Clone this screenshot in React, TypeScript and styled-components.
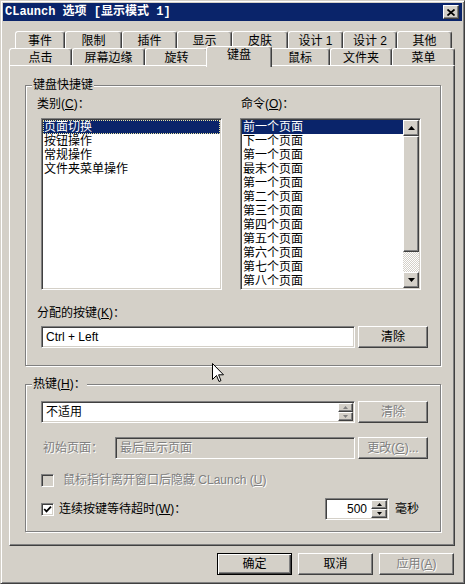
import React from 'react';
import styled, { createGlobalStyle, css } from 'styled-components';

const FACE = '#d4d0c8';
const SHADOW = '#808080';
const DARK = '#404040';
const NAVY = '#0a246a';

const GlobalStyle = createGlobalStyle`
  html, body {
    margin: 0;
    padding: 0;
    background: ${FACE};
  }
  body {
    font-family: "Liberation Sans", "Noto Sans CJK SC", sans-serif;
    font-size: 12px;
    line-height: 14px;
    color: #000;
  }
  * { box-sizing: border-box; }
`;

const raised = css`
  border: 1px solid;
  border-color: #fff ${DARK} ${DARK} #fff;
  box-shadow: inset -1px -1px ${SHADOW}, inset 1px 1px ${FACE};
  background: ${FACE};
`;

const sunken = css`
  border: 1px solid;
  border-color: ${SHADOW} #fff #fff ${SHADOW};
  box-shadow: inset 1px 1px ${DARK}, inset -1px -1px ${FACE};
`;

const greyed = css`
  color: ${SHADOW};
  text-shadow: 1px 1px #fff;
`;

const Window = styled.div`
  position: relative;
  width: 465px;
  height: 584px;
  background: ${FACE};
  border: 1px solid;
  border-color: ${FACE} ${DARK} ${DARK} ${FACE};
  box-shadow: inset 1px 1px #fff, inset -1px -1px ${SHADOW};
  padding: 2px;
  display: flex;
  flex-direction: column;
`;

const TitleBar = styled.div`
  height: 18px;
  background: ${NAVY};
  display: flex;
  align-items: center;
  justify-content: space-between;
  padding: 0 3px 0 2px;
`;

const TitleText = styled.span`
  font-family: "Liberation Mono", "Noto Sans CJK SC", monospace;
  font-weight: bold;
  font-size: 12px;
  color: #fff;
  white-space: pre;
`;

const CloseButton = styled.div`
  ${raised};
  width: 16px;
  height: 14px;
  display: flex;
  align-items: center;
  justify-content: center;
`;

const Body = styled.div`
  flex: 1;
  display: flex;
  flex-direction: column;
  padding: 10px 7px 0 6px;
`;

const TabRow = styled.div<{ $indent: number }>`
  display: flex;
  align-items: flex-end;
  height: 17px;
  padding-left: ${p => p.$indent}px;
`;

const Tab = styled.div<{ $w: number; $active?: boolean }>`
  width: ${p => p.$w + (p.$active ? 4 : 0)}px;
  height: ${p => (p.$active ? 21 : 17)}px;
  margin: ${p => (p.$active ? '0 -2px -2px' : '0')};
  position: ${p => (p.$active ? 'relative' : 'static')};
  z-index: ${p => (p.$active ? 2 : 'auto')};
  background: ${FACE};
  border: 1px solid;
  border-bottom: none;
  border-color: #fff ${DARK} transparent #fff;
  border-radius: 3px 3px 0 0;
  box-shadow: inset -1px 0 ${SHADOW};
  text-align: center;
  padding-top: ${p => (p.$active ? 1 : 2)}px;
  white-space: nowrap;
`;

const Panel = styled.div`
  height: 481px;
  border: 1px solid;
  border-color: #fff ${DARK} ${DARK} #fff;
  box-shadow: inset -1px -1px ${SHADOW};
  padding: 19px 0 0 15px;
  display: flex;
  flex-direction: column;
`;

const GroupBox = styled.div<{ $mt: number; $pb: number }>`
  width: 416px;
  margin-top: ${p => p.$mt}px;
  border: 1px solid ${SHADOW};
  box-shadow: inset 1px 1px #fff, 1px 1px #fff;
  padding: 0 12px ${p => p.$pb}px 15px;
  display: flex;
  flex-direction: column;
`;

const GroupTitle = styled.div`
  align-self: flex-start;
  margin: -8px 0 0 -9px;
  padding: 0 1px;
  background: ${FACE};
  line-height: 14px;
  white-space: nowrap;
`;

const U = styled.span`
  text-decoration: underline;
`;

const Columns = styled.div`
  display: grid;
  grid-template-columns: 181px 181px;
  column-gap: 18px;
  margin-top: 5px;
`;

const Column = styled.div`
  display: flex;
  flex-direction: column;
`;

const FieldLabel = styled.div<{ $mt?: number; $inset?: number }>`
  margin-top: ${p => p.$mt ?? 0}px;
  margin-left: ${p => p.$inset ?? -4}px;
  line-height: 14px;
  white-space: nowrap;
`;

const ListBox = styled.div<{ $scroll?: boolean }>`
  ${sunken};
  margin-top: 7px;
  height: 172px;
  background: #fff;
  padding: 1px;
  display: grid;
  grid-template-columns: ${p => (p.$scroll ? '1fr 16px' : '1fr')};
  overflow: hidden;
`;

const Items = styled.div`
  display: flex;
  flex-direction: column;
  min-width: 0;
`;

const Item = styled.div<{ $sel?: boolean; $focus?: boolean }>`
  height: 14px;
  line-height: 14px;
  padding-left: 1px;
  white-space: nowrap;
  background: ${p => (p.$sel ? NAVY : 'transparent')};
  color: ${p => (p.$sel ? '#fff' : '#000')};
  outline: ${p => (p.$focus ? '1px dotted #e8e4a0' : 'none')};
  outline-offset: -1px;
`;

const ScrollBar = styled.div`
  display: flex;
  flex-direction: column;
`;

const ScrollButton = styled.div<{ $h?: number }>`
  ${raised};
  height: ${p => p.$h ?? 16}px;
  flex-shrink: 0;
  display: flex;
  align-items: center;
  justify-content: center;
`;

const Track = styled.div`
  flex: 1;
  background: repeating-conic-gradient(#fff 0 25%, ${FACE} 0 50%) 0 0 / 2px 2px;
`;

const Row = styled.div<{ $mt: number; $h?: number }>`
  display: flex;
  align-items: center;
  gap: 3px;
  margin-top: ${p => p.$mt}px;
  height: ${p => p.$h ?? 22}px;
`;

const TextField = styled.div<{ $off?: boolean; $w?: number }>`
  ${sunken};
  height: 22px;
  flex: ${p => (p.$w ? `0 0 ${p.$w}px` : '1')};
  background: ${p => (p.$off ? FACE : '#fff')};
  padding: 0 1px 0 4px;
  display: flex;
  align-items: center;
  white-space: nowrap;
  ${p => p.$off && greyed};
`;

const FieldText = styled.span<{ $right?: boolean }>`
  flex: 1;
  text-align: ${p => (p.$right ? 'right' : 'left')};
  padding-right: ${p => (p.$right ? 4 : 0)}px;
`;

const Spinner = styled.div<{ $w: number }>`
  width: ${p => p.$w}px;
  height: 18px;
  display: flex;
  flex-direction: column;
`;

const SpinButton = styled.div`
  ${raised};
  flex: 1;
  display: flex;
  align-items: center;
  justify-content: center;
`;

const Button = styled.div<{ $w?: number; $off?: boolean; $default?: boolean }>`
  ${raised};
  width: ${p => p.$w ?? 70}px;
  height: 22px;
  flex-shrink: 0;
  display: flex;
  align-items: center;
  justify-content: center;
  white-space: nowrap;
  ${p => p.$off && greyed};
  ${p =>
    p.$default &&
    css`
      border-color: #000;
      box-shadow: inset 1px 1px #fff, inset -1px -1px ${DARK}, inset -2px -2px ${SHADOW};
    `};
`;

const StartLabel = styled.div`
  width: 71px;
  padding-left: 2px;
  white-space: nowrap;
  ${greyed};
`;

const CheckBox = styled.div<{ $off?: boolean }>`
  ${sunken};
  width: 13px;
  height: 13px;
  flex-shrink: 0;
  background: ${p => (p.$off ? FACE : '#fff')};
  display: flex;
  align-items: center;
  justify-content: center;
`;

const CheckLabel = styled.span<{ $off?: boolean; $ml: number }>`
  margin-left: ${p => p.$ml}px;
  white-space: nowrap;
  ${p => p.$off && greyed};
`;

const NumberField = styled(TextField)`
  margin-left: auto;
  padding-right: 1px;
`;

const Unit = styled.span`
  width: 36px;
  padding-left: 3px;
`;

const Footer = styled.div`
  display: flex;
  justify-content: flex-end;
  gap: 6px;
  margin-top: 7px;
  padding-right: 1px;
`;

const Cursor = styled.svg`
  position: absolute;
  left: 211px;
  top: 362px;
  z-index: 5;
`;

const Arrow = ({ down, grey, small }: { down?: boolean; grey?: boolean; small?: boolean }) => {
  const w = small ? 5 : 7;
  const h = small ? 3 : 4;
  const pts = down ? `0,0 ${w},0 ${w / 2},${h}` : `${w / 2},0 ${w},${h} 0,${h}`;
  return (
    <svg width={w} height={h} viewBox={`0 0 ${w} ${h}`}>
      <polygon points={pts} fill={grey ? SHADOW : '#000'} />
    </svg>
  );
};

const Check = () => (
  <svg width="9" height="9" viewBox="0 0 9 9">
    <polyline points="1.2,4 3.5,6.4 8,1.6" fill="none" stroke="#000" strokeWidth="1.8" />
  </svg>
);

const row1 = [
  ['事件', 50], ['限制', 57], ['插件', 55], ['显示', 55],
  ['皮肤', 56], ['设计 1', 55], ['设计 2', 54], ['其他', 55],
] as const;

const row2 = [
  ['点击', 63], ['屏幕边缘', 73], ['旋转', 63], ['键盘', 62],
  ['鼠标', 60], ['文件夹', 62], ['菜单', 63],
] as const;

const categories = ['页面切换', '按钮操作', '常规操作', '文件夹菜单操作'];

const commands = [
  '前一个页面', '下一个页面', '第一个页面', '最末个页面',
  '第一个页面', '第二个页面', '第三个页面', '第四个页面',
  '第五个页面', '第六个页面', '第七个页面', '第八个页面',
];

export default function App() {
  return (
    <>
      <GlobalStyle />
      <Window>
        <TitleBar>
          <TitleText>CLaunch 选项 [显示模式 1]</TitleText>
          <CloseButton>
            <svg width="8" height="7" viewBox="0 0 8 7">
              <path d="M0.5 0.5 L7.5 6.5 M7.5 0.5 L0.5 6.5" stroke="#000" strokeWidth="1.7" />
            </svg>
          </CloseButton>
        </TitleBar>

        <Body>
          <TabRow $indent={6}>
            {row1.map(([t, w]) => (
              <Tab key={t} $w={w}>{t}</Tab>
            ))}
          </TabRow>
          <TabRow $indent={0}>
            {row2.map(([t, w]) => (
              <Tab key={t} $w={w} $active={t === '键盘'}>{t}</Tab>
            ))}
          </TabRow>

          <Panel>
            <GroupBox $mt={0} $pb={17}>
              <GroupTitle>键盘快捷键</GroupTitle>
              <Columns>
                <Column>
                  <FieldLabel>类别(<U>C</U>)：</FieldLabel>
                  <ListBox>
                    <Items>
                      {categories.map((c, i) => (
                        <Item key={c} $sel={i === 0} $focus={i === 0}>{c}</Item>
                      ))}
                    </Items>
                  </ListBox>
                </Column>
                <Column>
                  <FieldLabel $inset={1}>命令(<U>O</U>)：</FieldLabel>
                  <ListBox $scroll>
                    <Items>
                      {commands.map((c, i) => (
                        <Item key={i} $sel={i === 0}>{c}</Item>
                      ))}
                    </Items>
                    <ScrollBar>
                      <ScrollButton><Arrow /></ScrollButton>
                      <ScrollButton $h={116} />
                      <Track />
                      <ScrollButton><Arrow down /></ScrollButton>
                    </ScrollBar>
                  </ListBox>
                </Column>
              </Columns>

              <FieldLabel $mt={16}>分配的按键(<U>K</U>)：</FieldLabel>
              <Row $mt={6}>
                <TextField>Ctrl + Left</TextField>
                <Button>清除</Button>
              </Row>
            </GroupBox>

            <GroupBox $mt={18} $pb={11}>
              <GroupTitle>热键(<U>H</U>)：</GroupTitle>
              <Row $mt={10}>
                <TextField>
                  <FieldText>不适用</FieldText>
                  <Spinner $w={15}>
                    <SpinButton><Arrow small grey /></SpinButton>
                    <SpinButton><Arrow small grey down /></SpinButton>
                  </Spinner>
                </TextField>
                <Button $off>清除</Button>
              </Row>
              <Row $mt={14}>
                <StartLabel>初始页面：</StartLabel>
                <TextField $off>最后显示页面</TextField>
                <Button $off>更改(<U>G</U>)...</Button>
              </Row>
              <Row $mt={14} $h={14}>
                <CheckBox $off />
                <CheckLabel $off $ml={6}>鼠标指针离开窗口后隐藏 CLaunch (<U>U</U>)</CheckLabel>
              </Row>
              <Row $mt={11}>
                <CheckBox><Check /></CheckBox>
                <CheckLabel $ml={2}>连续按键等待超时(<U>W</U>)：</CheckLabel>
                <NumberField $w={64}>
                  <FieldText $right>500</FieldText>
                  <Spinner $w={16}>
                    <SpinButton><Arrow small /></SpinButton>
                    <SpinButton><Arrow small down /></SpinButton>
                  </Spinner>
                </NumberField>
                <Unit>毫秒</Unit>
              </Row>
            </GroupBox>
          </Panel>

          <Footer>
            <Button $w={75} $default>确定</Button>
            <Button $w={75}>取消</Button>
            <Button $w={75} $off>应用(<U>A</U>)</Button>
          </Footer>
        </Body>

        <Cursor width="12" height="20" viewBox="0 0 12 20">
          <path
            d="M0.5 0.5 L0.5 16.5 L4.5 12.5 L7 18.5 L9 17.6 L6.6 11.8 L11.5 11.8 Z"
            fill="#fff"
            stroke="#000"
            strokeWidth="1"
          />
        </Cursor>
      </Window>
    </>
  );
}
